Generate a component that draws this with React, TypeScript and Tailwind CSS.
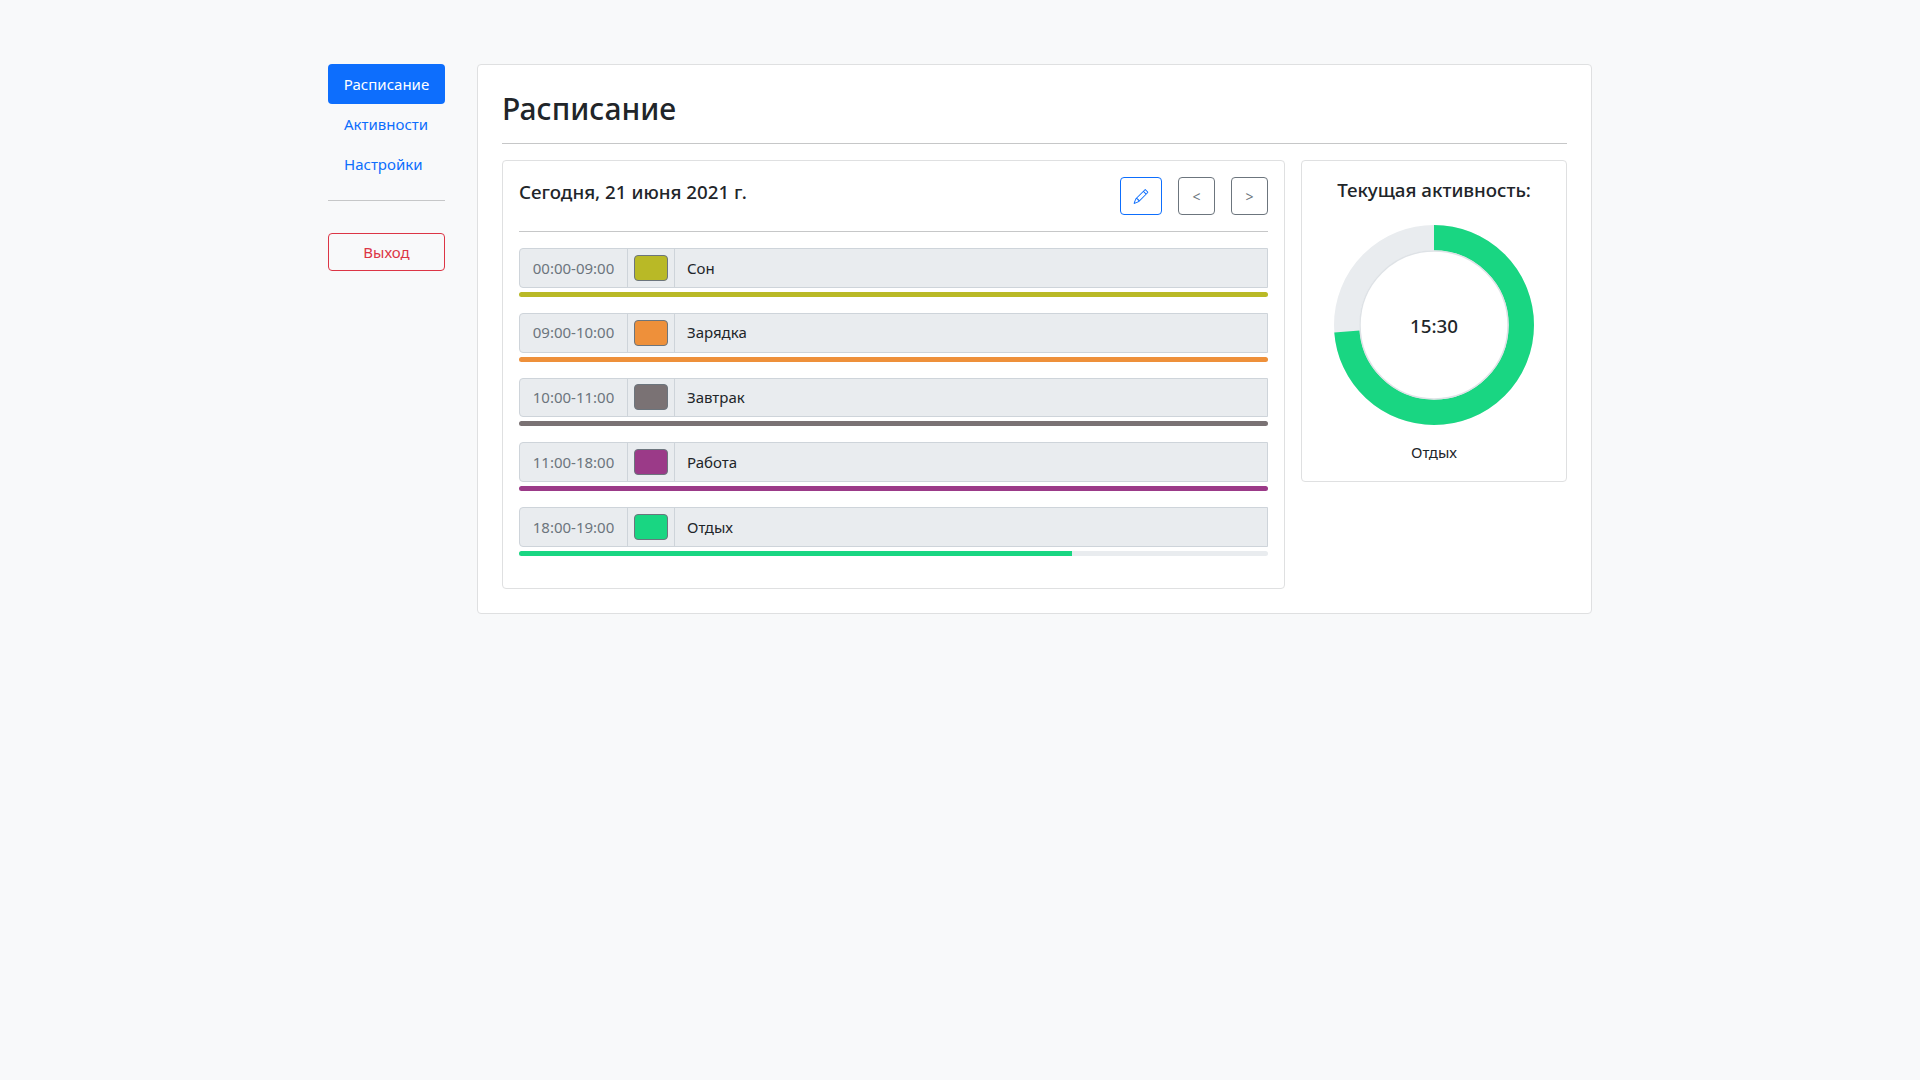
import React from "react";

const rows = [
  { time: "00:00-09:00", name: "Сон", color: "#b9b926", pct: 100 },
  { time: "09:00-10:00", name: "Зарядка", color: "#ee903a", pct: 100 },
  { time: "10:00-11:00", name: "Завтрак", color: "#7a7274", pct: 100 },
  { time: "11:00-18:00", name: "Работа", color: "#9b3a88", pct: 100 },
  { time: "18:00-19:00", name: "Отдых", color: "#19d682", pct: 73.8 },
];

function Pencil() {
  return (
    <svg width="15" height="15" viewBox="0 0 16 16" fill="#0d6efd" className="-translate-x-[0.5px]">
      <path d="M12.146.146a.5.5 0 0 1 .708 0l3 3a.5.5 0 0 1 0 .708l-10 10a.5.5 0 0 1-.168.11l-5 2a.5.5 0 0 1-.65-.65l2-5a.5.5 0 0 1 .11-.168l10-10zM11.207 2.5 13.5 4.793 14.793 3.5 12.5 1.207 11.207 2.5zm1.586 3L10.5 3.207 4 9.707V10h.5a.5.5 0 0 1 .5.5v.5h.5a.5.5 0 0 1 .5.5v.5h.293l6.5-6.5zm-9.761 5.175-.106.106-1.528 3.821 3.821-1.528.106-.106A.5.5 0 0 1 5 12.5V12h-.5a.5.5 0 0 1-.5-.5V11h-.5a.5.5 0 0 1-.468-.325z" />
    </svg>
  );
}

function Row({ time, name, color, pct }: { time: string; name: string; color: string; pct: number }) {
  return (
    <div className="mb-[16px]">
      <div className="flex h-[39.75px] rounded-l-[4px] border border-[#ced4da] bg-[#e9ecef] text-[15px]">
        <div className="flex w-[108px] items-center justify-center border-r border-[#ced4da] text-[#6c757d]">{time}</div>
        <div className="flex w-[47px] items-center justify-center border-r border-[#ced4da]">
          <div className="h-[26px] w-[34px] rounded-[4px] border border-[#6c757d]" style={{ backgroundColor: color }} />
        </div>
        <div className="flex flex-1 items-center pl-[12px] text-[#212529]">{name}</div>
      </div>
      <div className="mt-[4px] h-[5px] overflow-hidden rounded-[3px] bg-[#e9ecef]">
        <div className="h-full" style={{ width: `${pct}%`, backgroundColor: color }} />
      </div>
    </div>
  );
}

export default function App() {
  return (
    <div className="min-h-[1080px] bg-[#f8f9fa] font-['Noto_Sans','Open_Sans',sans-serif] text-[#212529]">
      <div className="mx-auto flex w-[1264px] items-start gap-[32px] pt-[64px]">
        <nav className="w-[117px] shrink-0 text-[15px]">
          <div className="flex h-[40px] items-center justify-center rounded-[4px] bg-[#0d6efd] text-white">Расписание</div>
          <div className="flex h-[40px] items-center pl-[16px] text-[#0d6efd]">Активности</div>
          <div className="flex h-[40px] items-center pl-[16px] text-[#0d6efd]">Настройки</div>
          <hr className="mt-[16px] mb-[32px] border-0 border-t border-[#c6c7c8]" />
          <div className="flex h-[38px] items-center justify-center rounded-[4px] border border-[#dc3545] text-[#dc3545]">Выход</div>
        </nav>
        <main className="w-[1115px] rounded-[4px] border border-[#dfe0e1] bg-white px-[24px] pt-[24px] pb-[24px]">
          <h2 className="pt-[1px] pb-[15px] text-[30px] leading-[38px] font-medium">Расписание</h2>
          <hr className="mb-[16px] border-0 border-t border-[#c6c7c8]" />
          <div className="flex items-start gap-[16px]">
            <section className="h-[429px] w-[783px] rounded-[4px] border border-[#dfe0e1] px-[16px] pt-[16px]">
              <div className="flex items-start justify-between pb-[16px]">
                <h5 className="pt-[3px] text-[18.75px] leading-[24px] font-medium">Сегодня, 21 июня 2021 г.</h5>
                <div className="flex">
                  <button className="flex h-[38px] w-[42px] items-center justify-center rounded-[4px] border border-[#0d6efd]"><Pencil /></button>
                  <button className="ml-[16px] flex h-[38px] w-[37px] items-center justify-center rounded-[4px] border border-[#6c757d] text-[14px] text-[#6c757d]">&lt;</button>
                  <button className="ml-[16px] flex h-[38px] w-[37px] items-center justify-center rounded-[4px] border border-[#6c757d] text-[14px] text-[#6c757d]">&gt;</button>
                </div>
              </div>
              <hr className="mb-[16px] border-0 border-t border-[#c6c7c8]" />
              {rows.map((r) => <Row key={r.time} {...r} />)}
            </section>
            <aside className="flex h-[322px] w-[266px] flex-col items-center rounded-[4px] border border-[#dfe0e1] pt-[17px]">
              <h5 className="text-[18.75px] leading-[24px] font-medium">Текущая активность:</h5>
              <div className="relative mt-[23px] h-[200px] w-[200px]">
                <svg width="200" height="200" viewBox="0 0 200 200" className="-rotate-90">
                  <circle cx="100" cy="100" r="87.25" fill="none" stroke="#e9ecef" strokeWidth="25.5" />
                  <circle cx="100" cy="100" r="87.25" fill="none" stroke="#19d682" strokeWidth="25.5" pathLength={100} strokeDasharray="73.8 100" />
                  <circle cx="100" cy="100" r="74" fill="none" stroke="#dee2e6" strokeWidth="1.5" />
                </svg>
                <div className="absolute inset-0 flex items-center justify-center pt-[2px] text-[18.75px] font-medium">15:30</div>
              </div>
              <div className="mt-[16px] text-[15px]">Отдых</div>
            </aside>
          </div>
        </main>
      </div>
    </div>
  );
}
